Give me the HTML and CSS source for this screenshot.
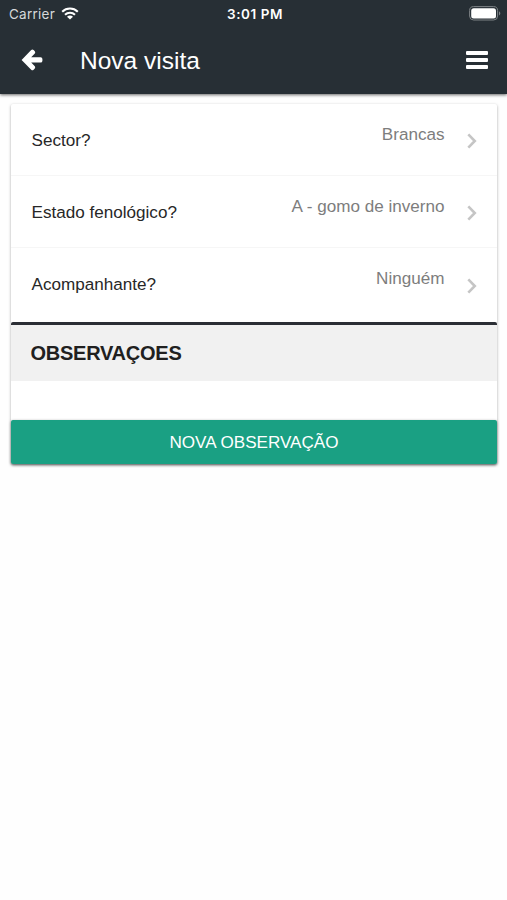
FILE: index.html
```html
<!DOCTYPE html>
<html lang="pt">
  <head>
    <meta charset="UTF-8" />
    <meta name="viewport" content="width=device-width, initial-scale=1.0" />
    <title>Nova visita</title>
    <link rel="stylesheet" href="styles.css">
  </head>
  <body>
    <header class="header">
      <div class="status-bar">
        <div class="carrier">
          <span>Carrier</span>
          <svg class="wifi" width="18" height="13" viewBox="0 0 18 13">
            <path d="M1.2 4.7C5.6 0.5 12.4 0.5 16.8 4.7M4 7.7C6.8 5.1 11.2 5.1 14 7.7" fill="none" stroke="#fff" stroke-width="2.1" />
            <path d="M9 12.6L6 9.7C7.7 8.2 10.3 8.2 12 9.7Z" fill="#fff" />
          </svg>
        </div>
        <div class="time">3:01 PM</div>
        <svg class="battery" width="32" height="15" viewBox="0 0 32 15">
          <rect x="0.6" y="0.6" width="28" height="13.4" rx="4" fill="none" stroke="#7e8386" stroke-width="1" />
          <rect x="2.2" y="2.2" width="24.8" height="10.2" rx="2.5" fill="#fff" />
          <path d="M30 5.2C31.8 6 31.8 8.6 30 9.4Z" fill="#7e8386" />
        </svg>
      </div>
      <div class="toolbar">
        <svg class="back" width="22" height="22" viewBox="0 0 22 22">
          <path d="M0.6 10.9L10.2 1.1Q11.4 0.1 12.6 1.1L13.8 2.3Q14.7 3.5 13.8 4.6L10.2 8.3H19.6Q21.4 8.4 21.4 10V12Q21.3 13.5 19.6 13.6H10.2L13.8 17.3Q14.7 18.4 13.8 19.5L12.6 20.7Q11.4 21.7 10.2 20.7Z" fill="#fff" />
        </svg>
        <h1>Nova visita</h1>
        <div class="menu">
          <span></span>
          <span></span>
          <span></span>
        </div>
      </div>
    </header>

    <main class="card">
      <div class="item">
        <span class="label">Sector?</span>
        <span class="value">Brancas</span>
        <svg class="chevron" width="10" height="16" viewBox="0 0 10 16">
          <path d="M1.3 1.3L7.8 8L1.3 14.7" />
        </svg>
      </div>
      <div class="item">
        <span class="label">Estado fenológico?</span>
        <span class="value">A - gomo de inverno</span>
        <svg class="chevron" width="10" height="16" viewBox="0 0 10 16">
          <path d="M1.3 1.3L7.8 8L1.3 14.7" />
        </svg>
      </div>
      <div class="item">
        <span class="label">Acompanhante?</span>
        <span class="value">Ninguém</span>
        <svg class="chevron" width="10" height="16" viewBox="0 0 10 16">
          <path d="M1.3 1.3L7.8 8L1.3 14.7" />
        </svg>
      </div>

      <h2 class="section-title">OBSERVAÇOES</h2>
      <button class="new-button">NOVA OBSERVAÇÃO</button>
    </main>
  </body>
</html>
```

FILE: styles.css
```css
* {
  box-sizing: border-box;
  margin: 0;
  padding: 0;
}

body {
  min-height: 100vh;
  background-color: #fefefe;
  color: #272727;
  font-family: "Liberation Sans", Arial, sans-serif;
}

.header {
  height: 94px;
  background-color: #272f35;
  color: #fff;
  box-shadow: 0 1px 3px rgba(0, 0, 0, 0.6);
}

/* Status bar */
.status-bar {
  display: grid;
  grid-template-columns: 1fr auto 1fr;
  align-items: center;
  height: 27px;
  padding: 0 6px 0 9px;
  font-family: Inter, sans-serif;
  font-size: 13.5px;
}

.carrier {
  display: flex;
  align-items: center;
  gap: 6px;
  color: #d5d8da;
  letter-spacing: 0.25px;
}

.time {
  font-size: 13.5px;
  font-weight: 600;
  letter-spacing: 0.55px;
}

.battery {
  justify-self: end;
}

/* Toolbar */
.toolbar {
  display: flex;
  align-items: center;
  height: 65px;
  padding: 0 19px 0 21px;
}

.toolbar h1 {
  flex: 1;
  margin-left: 37px;
  padding-top: 2px;
  font-size: 24.5px;
  font-weight: normal;
}

.menu {
  display: flex;
  flex-direction: column;
  gap: 3px;
  width: 22px;
}

.menu span {
  height: 4px;
  border-radius: 1px;
  background-color: #fff;
}

/* Card */
.card {
  margin: 10px 10px 0 11px;
  background-color: #fff;
  border-radius: 2px;
  box-shadow: 0 1px 3px rgba(0, 0, 0, 0.35);
}

.item {
  display: flex;
  align-items: center;
  height: 72px;
  padding: 0 20.5px;
  border-bottom: 1px solid #f6f6f6;
  font-size: 17.1px;
}

.item:nth-child(3) {
  height: 74px;
  padding-bottom: 2px;
  border-bottom: none;
}

.label {
  flex: 1;
  padding-top: 2px;
}

.value {
  margin-bottom: 10px;
  color: #7d7d7d;
}

.chevron {
  margin: 3px 0 0 22px;
}

.chevron path {
  fill: none;
  stroke: #c5c5c5;
  stroke-width: 2.6;
}

.section-title {
  height: 59px;
  padding-left: 19.5px;
  border-top: 3px solid #2b2e35;
  border-radius: 2px 2px 0 0;
  background-color: #f1f1f1;
  font-size: 20px;
  letter-spacing: -0.25px;
  line-height: 57px;
  color: #202020;
}

.new-button {
  display: block;
  width: 100%;
  height: 44px;
  margin-top: 39px;
  padding-top: 1px;
  border: none;
  border-radius: 2px;
  background-color: #1aa083;
  box-shadow: 0 1px 3px rgba(0, 0, 0, 0.5);
  color: #fff;
  font-family: inherit;
  font-size: 17.1px;
}
```
